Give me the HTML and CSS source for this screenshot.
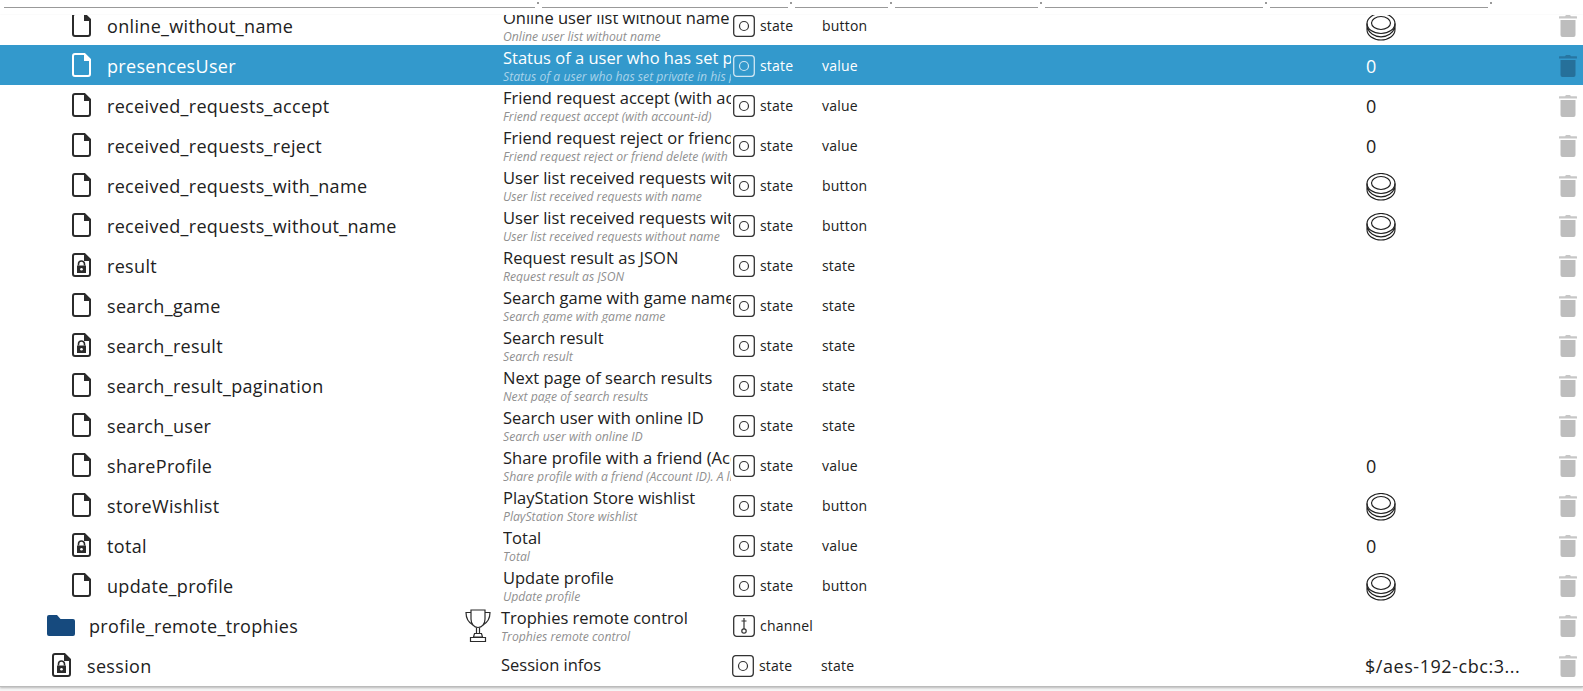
FILE: index.html
```html
<!DOCTYPE html>
<html lang="en">
<head>
	<meta charset="UTF-8">
	<title>Objects</title>
	<link rel="stylesheet" href="styles.css">
</head>
<body>
	<svg class="defs" width="0" height="0">
		<symbol id="file" viewBox="0 0 19 24">
			<path d="M3 1h9.500l5.500 5.500V21a2 2 0 0 1-2 2H3a2 2 0 0 1-2-2V3a2 2 0 0 1 2-2z" fill="none" stroke="currentColor" stroke-width="2"/>
			<path d="M12 1h1l5 5v2h-6z" fill="currentColor"/>
		</symbol>
		<symbol id="lock" viewBox="0 0 19 24">
			<path d="M3 1h9.500l5.500 5.500V21a2 2 0 0 1-2 2H3a2 2 0 0 1-2-2V3a2 2 0 0 1 2-2z" fill="none" stroke="currentColor" stroke-width="2"/>
			<path d="M12 1h1l5 5v2h-6z" fill="currentColor"/>
			<path d="M6.500 12.500V11a3 3 0 0 1 6 0v1.500" fill="none" stroke="currentColor" stroke-width="1.600"/>
			<path d="M5 12.500h9V20H5z" fill="currentColor"/>
			<circle cx="9.500" cy="16.200" r="1.300" fill="#fff"/>
		</symbol>
		<symbol id="folder" viewBox="0 0 28 21">
			<path d="M2 0h8l3.500 4H26a2 2 0 0 1 2 2v13a2 2 0 0 1-2 2H2a2 2 0 0 1-2-2V2a2 2 0 0 1 2-2z" fill="currentColor"/>
		</symbol>
		<symbol id="role-state" viewBox="0 0 22 22">
			<rect x="0.700" y="0.700" width="20.600" height="20.600" rx="3" fill="none" stroke="currentColor" stroke-width="1.300"/>
			<circle cx="11" cy="11" r="4.500" fill="none" stroke="currentColor" stroke-width="1.200"/>
		</symbol>
		<symbol id="role-channel" viewBox="0 0 22 22">
			<rect x="0.700" y="0.700" width="20.600" height="20.600" rx="3" fill="none" stroke="currentColor" stroke-width="1.300"/>
			<path d="M11 3v11M8.500 6h5" fill="none" stroke="currentColor" stroke-width="1.200"/>
			<circle cx="11" cy="16" r="2.200" fill="none" stroke="currentColor" stroke-width="1.200"/>
		</symbol>
		<symbol id="btn" viewBox="0 0 30 28">
			<ellipse cx="15" cy="10.500" rx="14" ry="10" fill="none" stroke="currentColor" stroke-width="1.150"/>
			<ellipse cx="15" cy="10" rx="9.500" ry="6.500" fill="none" stroke="currentColor" stroke-width="1.150"/>
			<path d="M1 10.500v6C1 22.500 7.300 27 15 27s14-4.500 14-10.500v-6M1.300 14.500C3 20 8.500 23.800 15 23.800S27 20 28.700 14.500" fill="none" stroke="currentColor" stroke-width="1.150"/>
		</symbol>
		<symbol id="trash" viewBox="0 0 18 22">
			<path d="M6 1.200 7 0h4l1 1.200h5.500a.5.500 0 0 1 .5.500V3.500H0V1.700a.5.500 0 0 1 .5-.5z" fill="currentColor" opacity=".85"/>
			<path d="M1.500 5h15v15a2 2 0 0 1-2 2h-11a2 2 0 0 1-2-2z" fill="currentColor"/>
		</symbol>
		<symbol id="trophy" viewBox="0 0 26 33">
			<path d="M6 1h14v9c0 5-3 8.500-7 8.500S6 15 6 10z" fill="none" stroke="currentColor" stroke-width="1.200"/>
			<path d="M6 3.500H1c0 6 2.500 10 7 12.500M20 3.500h5c0 6-2.500 10-7 12.500" fill="none" stroke="currentColor" stroke-width="1.200"/>
			<path d="M11.500 18.500v6M14.500 18.500v6M9.500 24.500h7l1 3.500h-9zM5.500 28.500h15v4h-15z" fill="none" stroke="currentColor" stroke-width="1.200"/>
		</symbol>
	</svg>

	<div class="header">
		<span class="seg seg1"></span><i class="dot"></i>
		<span class="seg seg2"></span><i class="dot"></i>
		<span class="seg seg3"></span><i class="dot"></i>
		<span class="seg seg4"></span><i class="dot"></i>
		<span class="seg seg5"></span><i class="dot"></i>
		<span class="seg seg6"></span><i class="dot"></i>
	</div>

	<div class="list">
		<div class="rows">
			<div class="row">
				<div class="name"><svg class="ico"><use href="#file"/></svg><span>online_without_name</span></div>
				<div class="desc"><b>Online user list without name</b><em>Online user list without name</em></div>
				<div class="role"><svg class="ico-role"><use href="#role-state"/></svg><span>state</span></div>
				<div class="type">button</div>
				<div class="val"><svg class="ico-btn"><use href="#btn"/></svg></div>
				<div class="act"><svg class="ico-trash"><use href="#trash"/></svg></div>
			</div>
			<div class="row selected">
				<div class="name"><svg class="ico"><use href="#file"/></svg><span>presencesUser</span></div>
				<div class="desc"><b>Status of a user who has set private in his profile</b><em>Status of a user who has set private in his profile</em></div>
				<div class="role"><svg class="ico-role"><use href="#role-state"/></svg><span>state</span></div>
				<div class="type">value</div>
				<div class="val">0</div>
				<div class="act"><svg class="ico-trash"><use href="#trash"/></svg></div>
			</div>
			<div class="row">
				<div class="name"><svg class="ico"><use href="#file"/></svg><span>received_requests_accept</span></div>
				<div class="desc"><b>Friend request accept (with account-id)</b><em>Friend request accept (with account-id)</em></div>
				<div class="role"><svg class="ico-role"><use href="#role-state"/></svg><span>state</span></div>
				<div class="type">value</div>
				<div class="val">0</div>
				<div class="act"><svg class="ico-trash"><use href="#trash"/></svg></div>
			</div>
			<div class="row">
				<div class="name"><svg class="ico"><use href="#file"/></svg><span>received_requests_reject</span></div>
				<div class="desc"><b>Friend request reject or friend delete (with account-id)</b><em>Friend request reject or friend delete (with account-id)</em></div>
				<div class="role"><svg class="ico-role"><use href="#role-state"/></svg><span>state</span></div>
				<div class="type">value</div>
				<div class="val">0</div>
				<div class="act"><svg class="ico-trash"><use href="#trash"/></svg></div>
			</div>
			<div class="row">
				<div class="name"><svg class="ico"><use href="#file"/></svg><span>received_requests_with_name</span></div>
				<div class="desc"><b>User list received requests with name</b><em>User list received requests with name</em></div>
				<div class="role"><svg class="ico-role"><use href="#role-state"/></svg><span>state</span></div>
				<div class="type">button</div>
				<div class="val"><svg class="ico-btn"><use href="#btn"/></svg></div>
				<div class="act"><svg class="ico-trash"><use href="#trash"/></svg></div>
			</div>
			<div class="row">
				<div class="name"><svg class="ico"><use href="#file"/></svg><span>received_requests_without_name</span></div>
				<div class="desc"><b>User list received requests without name</b><em>User list received requests without name</em></div>
				<div class="role"><svg class="ico-role"><use href="#role-state"/></svg><span>state</span></div>
				<div class="type">button</div>
				<div class="val"><svg class="ico-btn"><use href="#btn"/></svg></div>
				<div class="act"><svg class="ico-trash"><use href="#trash"/></svg></div>
			</div>
			<div class="row">
				<div class="name"><svg class="ico"><use href="#lock"/></svg><span>result</span></div>
				<div class="desc"><b>Request result as JSON</b><em>Request result as JSON</em></div>
				<div class="role"><svg class="ico-role"><use href="#role-state"/></svg><span>state</span></div>
				<div class="type">state</div>
				<div class="val"></div>
				<div class="act"><svg class="ico-trash"><use href="#trash"/></svg></div>
			</div>
			<div class="row">
				<div class="name"><svg class="ico"><use href="#file"/></svg><span>search_game</span></div>
				<div class="desc"><b>Search game with game name</b><em>Search game with game name</em></div>
				<div class="role"><svg class="ico-role"><use href="#role-state"/></svg><span>state</span></div>
				<div class="type">state</div>
				<div class="val"></div>
				<div class="act"><svg class="ico-trash"><use href="#trash"/></svg></div>
			</div>
			<div class="row">
				<div class="name"><svg class="ico"><use href="#lock"/></svg><span>search_result</span></div>
				<div class="desc"><b>Search result</b><em>Search result</em></div>
				<div class="role"><svg class="ico-role"><use href="#role-state"/></svg><span>state</span></div>
				<div class="type">state</div>
				<div class="val"></div>
				<div class="act"><svg class="ico-trash"><use href="#trash"/></svg></div>
			</div>
			<div class="row">
				<div class="name"><svg class="ico"><use href="#file"/></svg><span>search_result_pagination</span></div>
				<div class="desc"><b>Next page of search results</b><em>Next page of search results</em></div>
				<div class="role"><svg class="ico-role"><use href="#role-state"/></svg><span>state</span></div>
				<div class="type">state</div>
				<div class="val"></div>
				<div class="act"><svg class="ico-trash"><use href="#trash"/></svg></div>
			</div>
			<div class="row">
				<div class="name"><svg class="ico"><use href="#file"/></svg><span>search_user</span></div>
				<div class="desc"><b>Search user with online ID</b><em>Search user with online ID</em></div>
				<div class="role"><svg class="ico-role"><use href="#role-state"/></svg><span>state</span></div>
				<div class="type">state</div>
				<div class="val"></div>
				<div class="act"><svg class="ico-trash"><use href="#trash"/></svg></div>
			</div>
			<div class="row">
				<div class="name"><svg class="ico"><use href="#file"/></svg><span>shareProfile</span></div>
				<div class="desc"><b>Share profile with a friend (Account ID)</b><em>Share profile with a friend (Account ID). A link will be sent</em></div>
				<div class="role"><svg class="ico-role"><use href="#role-state"/></svg><span>state</span></div>
				<div class="type">value</div>
				<div class="val">0</div>
				<div class="act"><svg class="ico-trash"><use href="#trash"/></svg></div>
			</div>
			<div class="row">
				<div class="name"><svg class="ico"><use href="#file"/></svg><span>storeWishlist</span></div>
				<div class="desc"><b>PlayStation Store wishlist</b><em>PlayStation Store wishlist</em></div>
				<div class="role"><svg class="ico-role"><use href="#role-state"/></svg><span>state</span></div>
				<div class="type">button</div>
				<div class="val"><svg class="ico-btn"><use href="#btn"/></svg></div>
				<div class="act"><svg class="ico-trash"><use href="#trash"/></svg></div>
			</div>
			<div class="row">
				<div class="name"><svg class="ico"><use href="#lock"/></svg><span>total</span></div>
				<div class="desc"><b>Total</b><em>Total</em></div>
				<div class="role"><svg class="ico-role"><use href="#role-state"/></svg><span>state</span></div>
				<div class="type">value</div>
				<div class="val">0</div>
				<div class="act"><svg class="ico-trash"><use href="#trash"/></svg></div>
			</div>
			<div class="row">
				<div class="name"><svg class="ico"><use href="#file"/></svg><span>update_profile</span></div>
				<div class="desc"><b>Update profile</b><em>Update profile</em></div>
				<div class="role"><svg class="ico-role"><use href="#role-state"/></svg><span>state</span></div>
				<div class="type">button</div>
				<div class="val"><svg class="ico-btn"><use href="#btn"/></svg></div>
				<div class="act"><svg class="ico-trash"><use href="#trash"/></svg></div>
			</div>
			<div class="row row-folder">
				<div class="name"><svg class="ico-folder"><use href="#folder"/></svg><span>profile_remote_trophies</span></div>
				<div class="desc"><svg class="ico-trophy"><use href="#trophy"/></svg><div class="desc-text"><b>Trophies remote control</b><em>Trophies remote control</em></div></div>
				<div class="role"><svg class="ico-role"><use href="#role-channel"/></svg><span>channel</span></div>
				<div class="type"></div>
				<div class="val"></div>
				<div class="act"><svg class="ico-trash"><use href="#trash"/></svg></div>
			</div>
			<div class="row row-top">
				<div class="name"><svg class="ico"><use href="#lock"/></svg><span>session</span></div>
				<div class="desc"><b>Session infos</b></div>
				<div class="role"><svg class="ico-role"><use href="#role-state"/></svg><span>state</span></div>
				<div class="type">state</div>
				<div class="val val-long">$/aes-192-cbc:3...</div>
				<div class="act"><svg class="ico-trash"><use href="#trash"/></svg></div>
			</div>
		</div>
	</div>
</body>
</html>
```

FILE: styles.css
```css
*{
	margin:0;
	padding:0;
	box-sizing:border-box;
}
html,
body{
	height:691px;
	overflow:hidden;
}
body{
	background:#f5f5f5;
	color:#212121;
	font-family:"Open Sans","Noto Sans",sans-serif;
}
.defs{
	display:block;
	height:0;
}

/* column resize handles */
.header{
	display:flex;
	height:15px;
	padding-left:4px;
	background:#fff;
}
.seg{
	display:block;
	height:8px;
	border-bottom:1px solid #999;
}
.dot{
	display:block;
	width:2px;
	height:2px;
	margin:2px 3px 0 2px;
	background:#999;
}
.seg1{width:531px;}
.seg2{width:246px;}
.seg3{width:93px;}
.seg4{width:143px;}
.seg5{width:218px;}
.seg6{width:218px;}

.list{
	height:672px;
	overflow:hidden;
	background:#fff;
	border-bottom:1px solid #bbb;
	box-shadow:0 1px 2px rgba(0,0,0,.25);
}
.rows{
	margin-top:-10px;
}
.row{
	display:flex;
	align-items:center;
	height:40px;
	background:#fff;
}
.selected{
	background:#3399cc;
	color:#fff;
}

.name{
	display:flex;
	align-items:center;
	flex:none;
	width:503px;
	padding-left:72px;
	font-size:18px;
	letter-spacing:.33px;
}
.name span{
	padding-top:2px;
}
.ico{
	flex:none;
	width:19px;
	height:24px;
	margin-right:16px;
	color:#2b2b2b;
}
.selected .ico{
	color:#fff;
}
.row-folder .name{
	padding-left:47px;
}
.ico-folder{
	flex:none;
	width:28px;
	height:21px;
	margin-right:14px;
	color:#164a7e;
}
.row-top .name{
	padding-left:52px;
}

.desc{
	flex:none;
	width:228px;
	overflow:hidden;
	white-space:nowrap;
	font-size:16.500px;
	line-height:20px;
}
.desc b{
	display:block;
	font-weight:400;
}
.desc em{
	display:block;
	margin-top:2px;
	font-size:12.200px;
	line-height:13px;
	color:#8f8f8f;
}
.selected .desc em{
	color:#a9d3ea;
}
.row-top .desc{
	margin-left:-2px;
	width:229px;
}
.row-top .act{
	margin-left:1px;
}
.row-folder .desc{
	display:flex;
	align-items:center;
	margin-left:-38px;
	width:266px;
}
.ico-trophy{
	flex:none;
	width:26px;
	height:33px;
	margin-right:10px;
	color:#2b2b2b;
}

.role{
	display:flex;
	align-items:center;
	flex:none;
	width:91px;
	padding-left:2px;
	font-size:14px;
	letter-spacing:.2px;
}
.ico-role{
	flex:none;
	width:22px;
	height:22px;
	margin-right:5px;
	margin-top:2px;
	color:#333;
}
.selected .ico-role{
	color:#cfe6f3;
}
.type{
	flex:none;
	width:544px;
	font-size:14px;
	letter-spacing:.2px;
}
.val{
	flex:none;
	width:193px;
	padding-top:2px;
	font-size:18px;
	white-space:nowrap;
}
.val-long{
	letter-spacing:.55px;
}
.ico-btn{
	display:block;
	width:30px;
	height:28px;
	margin-top:1px;
	color:#1f1f1f;
}
.act{
	flex:none;
	width:18px;
	height:22px;
	margin-top:2px;
}
.ico-trash{
	display:block;
	width:18px;
	height:22px;
	color:#bdbdbd;
}
.selected .ico-trash{
	color:#26709a;
}
```
